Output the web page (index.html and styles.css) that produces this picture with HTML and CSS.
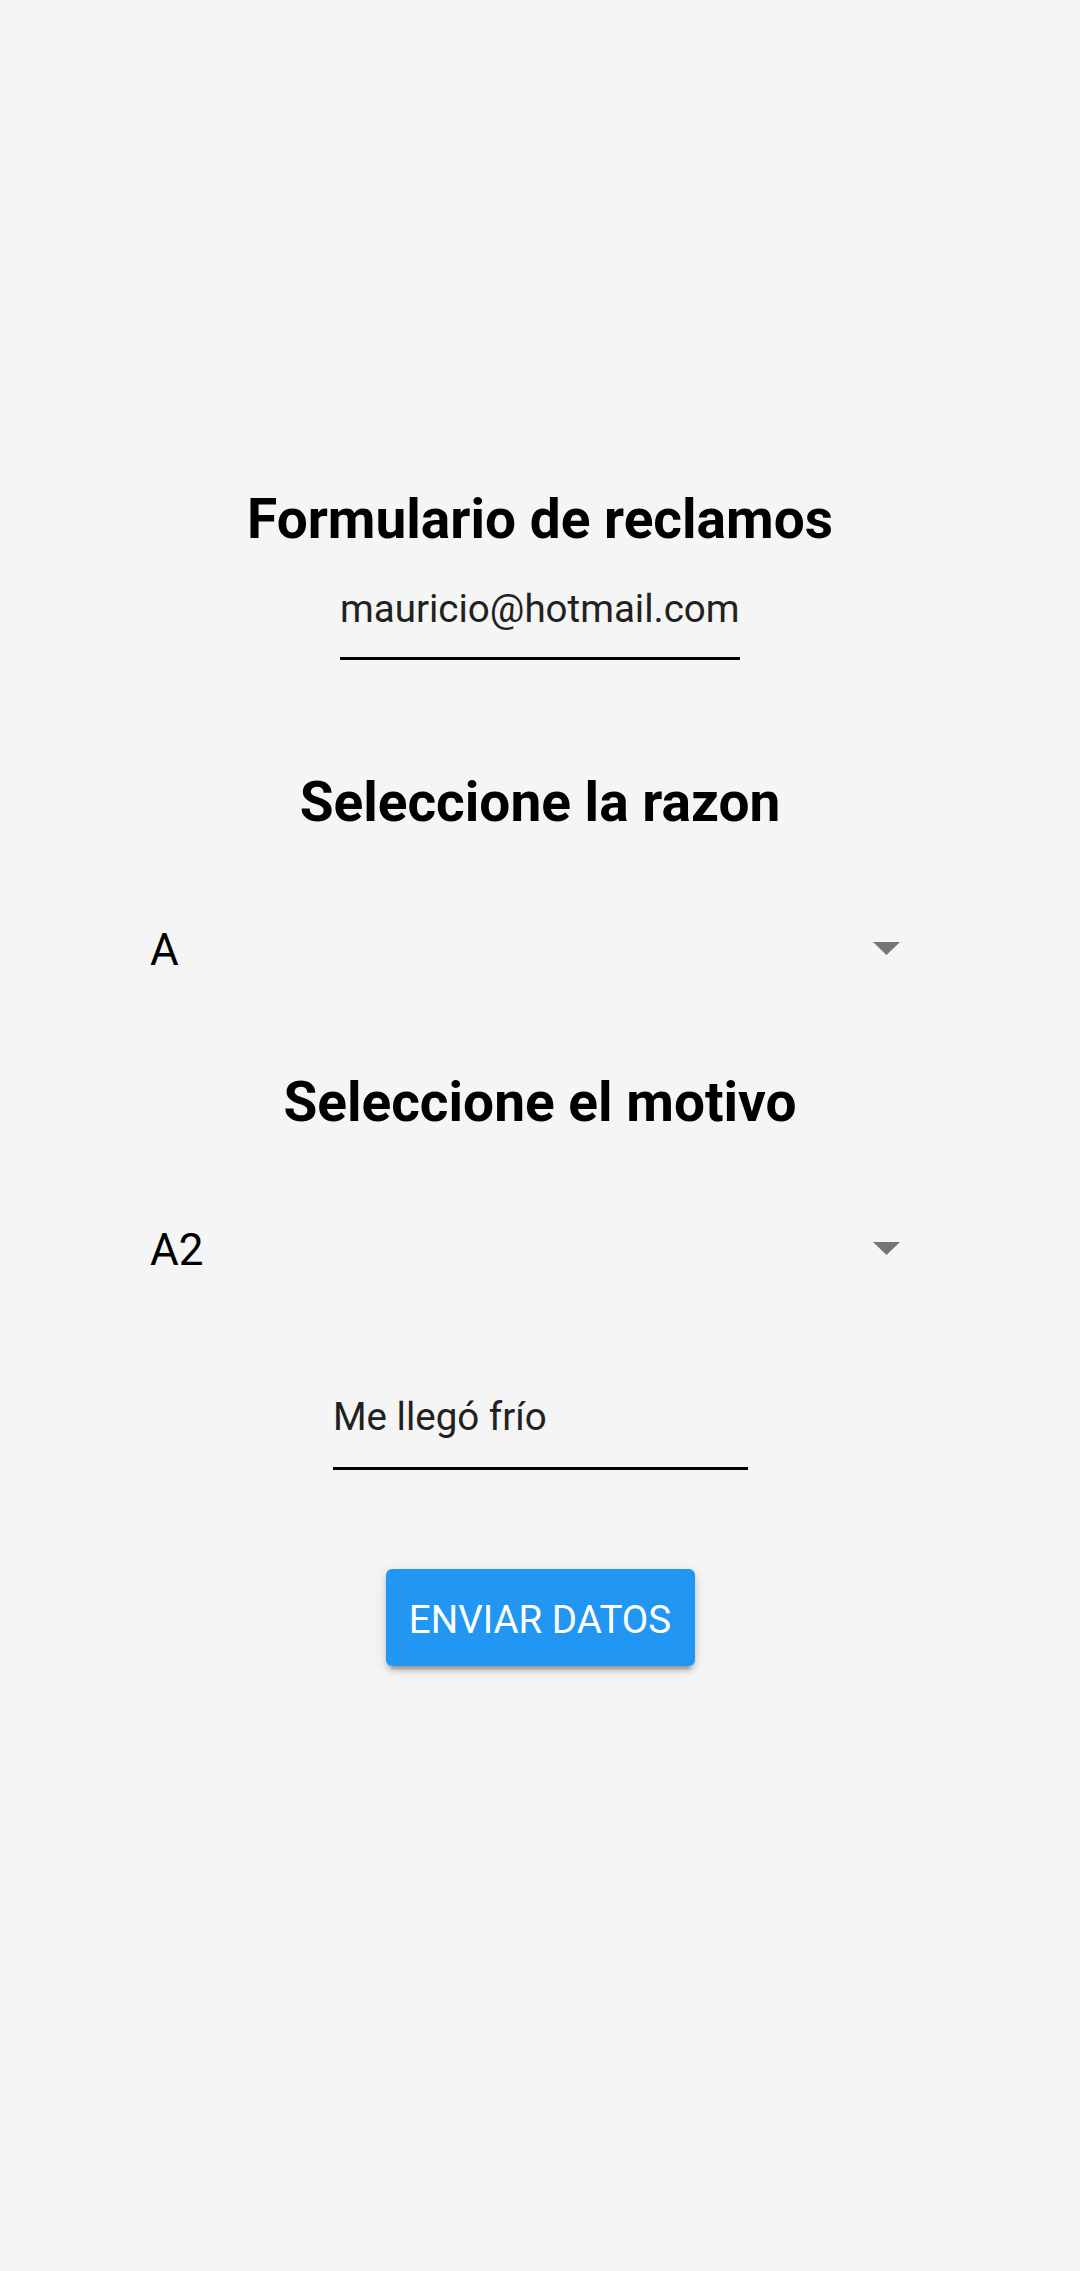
FILE: index.html
```html
<!DOCTYPE html>
<html lang="es">
<head>
<meta charset="utf-8">
<title>Formulario de reclamos</title>
<link rel="stylesheet" href="styles.css">
</head>
<body>
<main class="page">
  <h1 class="heading heading-title">Formulario de reclamos</h1>
  <div class="field field-email">mauricio@hotmail.com</div>

  <h2 class="heading heading-reason">Seleccione la razon</h2>
  <div class="dropdown dropdown-first">
    <span class="dropdown-value">A</span>
    <svg class="dropdown-icon" width="66" height="52" viewBox="0 0 66 52"><polygon points="19,18 46,18 32.5,31" fill="#757575"/></svg>
  </div>

  <h2 class="heading heading-motive">Seleccione el motivo</h2>
  <div class="dropdown dropdown-second">
    <span class="dropdown-value">A2</span>
    <svg class="dropdown-icon" width="66" height="52" viewBox="0 0 66 52"><polygon points="19,18 46,18 32.5,31" fill="#757575"/></svg>
  </div>

  <div class="field field-comment">Me llegó frío</div>

  <button class="submit" type="button">ENVIAR DATOS</button>
</main>
</body>
</html>
```
FILE: styles.css
```css
html, body {
  margin: 0;
  padding: 0;
  background: #f5f5f5;
}

body {
  font-family: Roboto, "Noto Sans", "Liberation Sans", sans-serif;
  color: #000;
  min-height: 2271px;
}

.page {
  display: flex;
  flex-direction: column;
  align-items: center;
  padding-top: 487px;
}

.heading {
  margin: 0;
  font-size: 55px;
  font-weight: 700;
  line-height: 64px;
  color: #000;
  text-align: center;
}

.heading-reason {
  margin-top: 110px;
}

.heading-motive {
  margin-top: 94px;
}

.field {
  font-size: 38.5px;
  line-height: 45px;
  color: #212121;
  border-bottom: 3px solid #000;
  text-align: left;
  white-space: nowrap;
}

.field-email {
  width: 400px;
  margin-top: 35px;
  padding-bottom: 26px;
}

.field-comment {
  width: 415px;
  margin-top: 118px;
  padding-bottom: 28px;
  margin-left: 1px;
}

.dropdown {
  align-self: stretch;
  display: flex;
  align-items: flex-start;
  justify-content: space-between;
  margin-left: 150px;
  margin-right: 160px;
  height: 52px;
}

.dropdown-first {
  margin-top: 90px;
}

.dropdown-second {
  margin-top: 90px;
}

.dropdown-value {
  font-size: 44px;
  line-height: 52px;
  color: #000;
}

.dropdown-icon {
  display: block;
  flex: none;
}

.submit {
  margin-top: 99px;
  width: 309px;
  height: 97px;
  padding: 4px 0 0;
  box-sizing: border-box;
  border: none;
  border-radius: 6px;
  background: #2196f3;
  color: #fff;
  font-family: Roboto, "Noto Sans", "Liberation Sans", sans-serif;
  font-size: 38.5px;
  font-weight: 400;
  line-height: 93px;
  text-align: center;
  box-shadow: 0 8px 3px -5px rgba(0, 0, 0, 0.2), 0 5px 5px rgba(0, 0, 0, 0.14), 0 3px 14px rgba(0, 0, 0, 0.12);
}
```
